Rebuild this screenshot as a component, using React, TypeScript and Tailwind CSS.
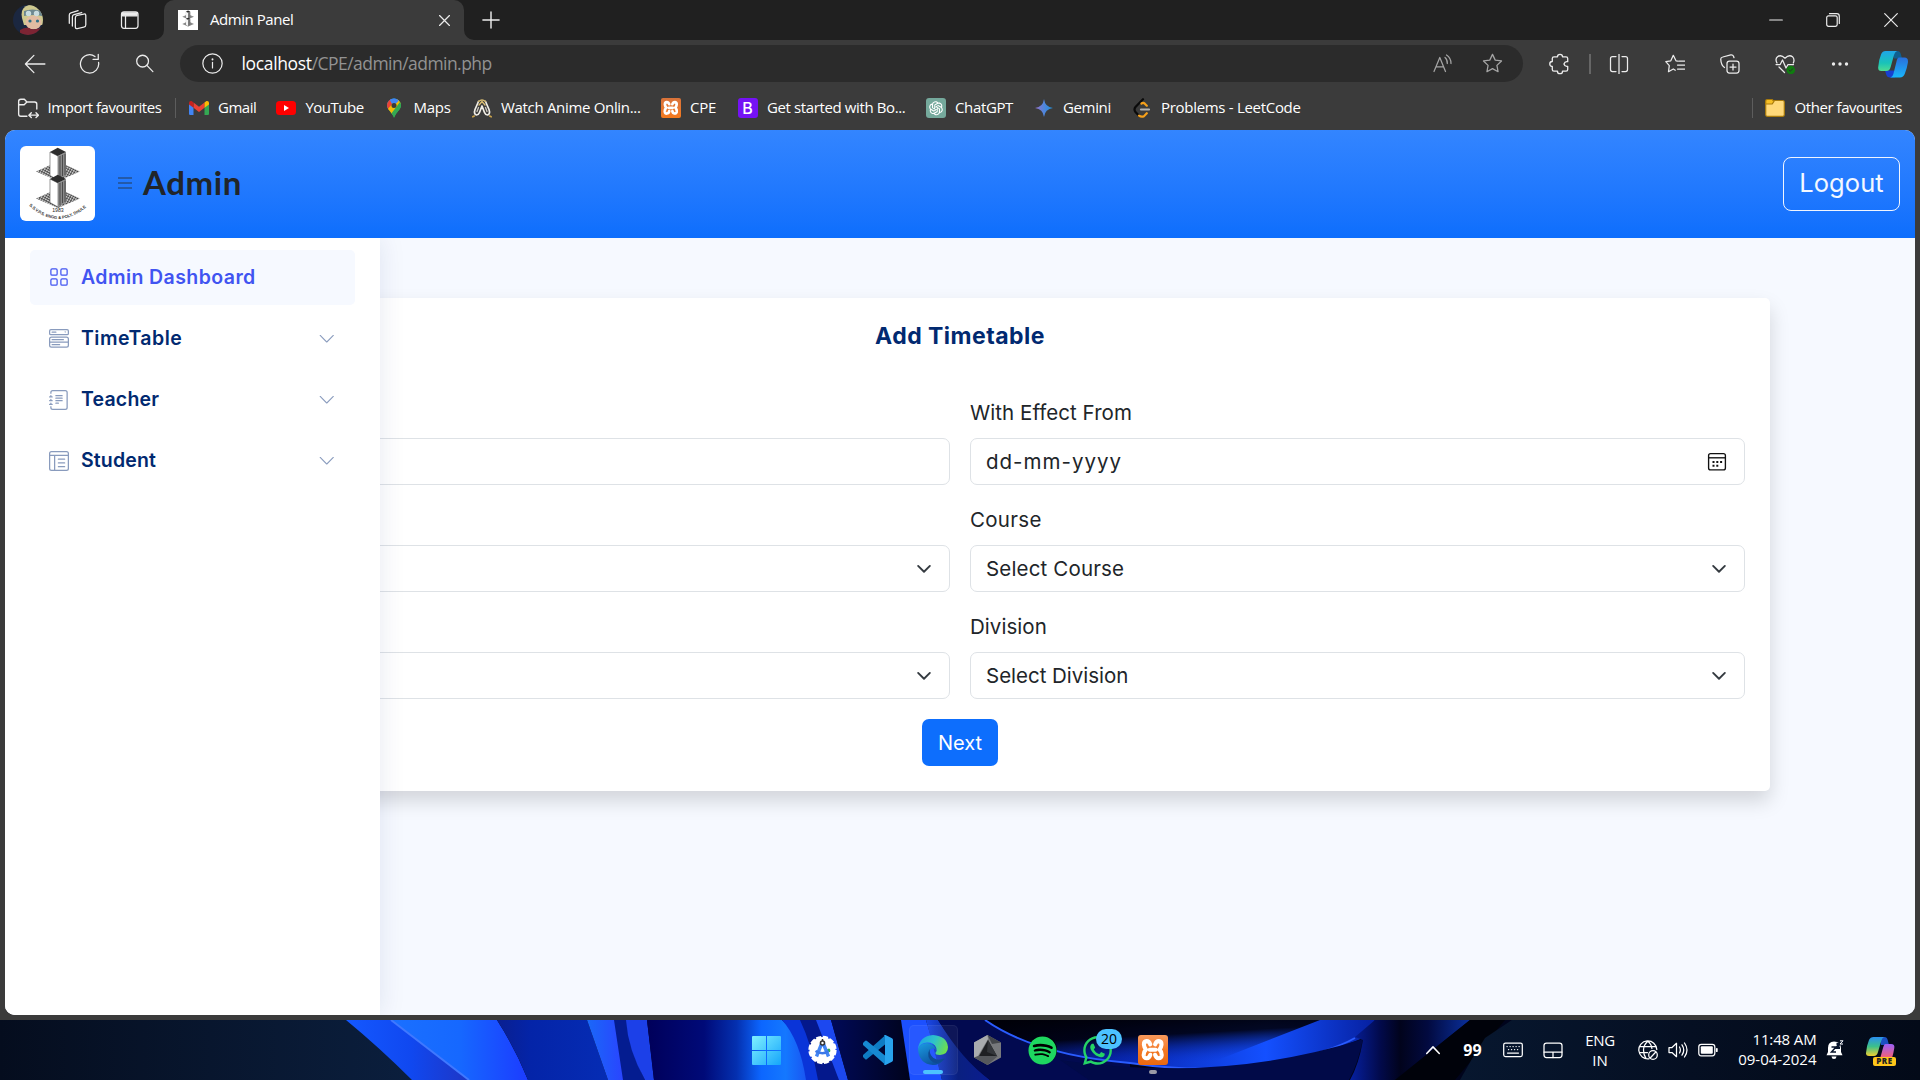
import type { ReactNode } from 'react';
import { BsGrid, BsMenuButtonWide, BsJournalText, BsLayoutTextWindowReverse, BsChevronDown } from 'react-icons/bs';
import { AiOutlineOpenAI } from 'react-icons/ai';
import { FaWhatsapp, FaSpotify } from 'react-icons/fa';

type Kids = { children: ReactNode };

/* 20px line icon used across the browser chrome */
const Line = ({ children, size = 20, w = 1.25, className = 'text-[#ececec]' }: Kids & { size?: number; w?: number; className?: string }) => (
  <svg width={size} height={size} viewBox="0 0 20 20" fill="none" stroke="currentColor" strokeWidth={w} strokeLinecap="round" strokeLinejoin="round" className={`shrink-0 ${className}`}>
    {children}
  </svg>
);

const STAR = 'M10 1.3l2.6 5.5 6 .8-4.4 4.2 1.1 6L10 14.9l-5.3 2.9 1.1-6L1.4 7.6l6-.8z';

const SchoolLogo = ({ size, caption = false }: { size: number; caption?: boolean }) => (
  <svg width={size} height={size} viewBox="0 0 75 75" className="shrink-0">
    <defs>
      <pattern id="hatch" width="2.4" height="2.4" patternUnits="userSpaceOnUse" patternTransform="rotate(28)">
        <rect width="2.4" height="2.4" fill="#c4c4c4" />
        <path d="M0 0H2.4M0 0V2.4" stroke="#333" strokeWidth="1.1" />
      </pattern>
      <path id="arc" d="M9 59.500Q37 86 68 60" />
    </defs>
    <rect width="75" height="75" fill="#fff" />
    {[0, 27].map((dy) => (
      <g key={dy} transform={`translate(0 ${dy})`}>
        <path d="M16 25.500L38 15.500 60 25.500 38 35z" fill="url(#hatch)" />
        <path d="M30 6l8 4v24l-8-4.500z" fill="#fff" stroke="#555" strokeWidth=".6" />
        <path d="M38 10l8-4v23.500l-8 4.500z" fill="#8a8a8a" />
        <path d="M40 10v22M42.500 9v21M45 8v21" stroke="#444" strokeWidth=".9" />
        <path d="M30 6l7.700-4.200L46 6l-8.200 4z" fill="#2d2d2d" />
      </g>
    ))}
    {caption && (
      <>
        <text x="38" y="65.500" textAnchor="middle" fontSize="5.200" fill="#222" fontFamily="Liberation Sans, sans-serif">1983</text>
        <text fontSize="4.200" fontWeight="700" fill="#333" fontFamily="Liberation Sans, sans-serif" letterSpacing="-.05">
          <textPath href="#arc">S.S.V.P.S. ENGG &amp; POLY. DHULE</textPath>
        </text>
      </>
    )}
  </svg>
);

const Avatar = () => (
  <svg width="30" height="30" viewBox="0 0 30 30" className="shrink-0">
    <defs><clipPath id="av"><circle cx="15" cy="15" r="15" /></clipPath></defs>
    <g clipPath="url(#av)">
      <rect width="30" height="30" fill="#1b2740" />
      <path d="M9 13Q7 2 16 0q12-1 14 10v10H11z" fill="#cfc98e" />
      <ellipse cx="20.500" cy="17.500" rx="8" ry="7" fill="#e2bca2" />
      <path d="M11 6q8-3 18 0v5q-8-2-18 0z" fill="#6d8890" />
      <circle cx="15.500" cy="8.500" r="2.700" fill="#c8dcdf" /><circle cx="23.500" cy="8.500" r="2.700" fill="#c8dcdf" />
      <circle cx="17" cy="16" r="1.600" fill="#2f6f86" /><circle cx="24.500" cy="16" r="1.600" fill="#2f6f86" />
      <path d="M7 25q7-4 11-1 5 1 12-2v8H7z" fill="#7c2433" />
    </g>
  </svg>
);

const TitleBar = () => (
  <div className="flex h-10 w-full bg-[#202020]">
    <div className="flex w-[164px] items-center pl-[13px]">
      <Avatar />
      <div className="ml-[23px]">
        <Line size={22} w={1.150}>
          <rect x="8.500" y="5.500" width="9.500" height="12" rx="1.800" transform="skewY(-12) translate(0 2.500)" />
          <path d="M5.800 15.500V7.200q0-1.500 1.500-2l7-2" />
          <path d="M3 13V5.500q0-1.500 1.500-2l6.500-2" />
        </Line>
      </div>
      <div className="ml-[32px]">
        <Line>
          <rect x="1.500" y="1.800" width="16.500" height="16.500" rx="2.500" />
          <path d="M5.500 6v12" />
          <path d="M2.500 2.800h14.500v3H2.500z" fill="#ececec" />
        </Line>
      </div>
    </div>
    <div className="relative flex h-10 w-[300px] items-center rounded-t-[10px] bg-[#3b3b3b] pl-[14px]">
      <svg className="absolute bottom-0 -left-[10px]" width="10" height="10"><path d="M10 0v10H0A10 10 0 0 0 10 0z" fill="#3b3b3b" /></svg>
      <svg className="absolute -right-[10px] bottom-0" width="10" height="10"><path d="M0 0v10h10A10 10 0 0 1 0 0z" fill="#3b3b3b" /></svg>
      <SchoolLogo size={20} />
      <span className="mb-px ml-[12px] text-[15px] tracking-[-0.45px] text-white">Admin Panel</span>
      <div className="mr-[14.500px] ml-auto"><Line size={11} w={2.200}><path d="M1 1l18 18M19 1L1 19" /></Line></div>
    </div>
    <div className="ml-[18px] flex items-center"><Line size={18} w={1.600}><path d="M10 1v18M1 10h18" /></Line></div>
    <div className="ml-auto flex items-center">
      <div className="flex w-[57.500px] justify-center"><Line size={14} w={1.700}><path d="M1 10h18" /></Line></div>
      <div className="flex w-[57.500px] justify-center">
        <Line size={14} w={1.700}><rect x="1" y="4" width="15" height="15" rx="2.500" /><path d="M5 1h10.500q3.500 0 3.500 3.500V15" /></Line>
      </div>
      <div className="flex w-[58px] justify-center"><Line size={14} w={1.700}><path d="M1 1l18 18M19 1L1 19" /></Line></div>
    </div>
  </div>
);

const Copilot = () => (
  <svg width="30" height="28" viewBox="0 0 30 28" className="shrink-0">
    <defs>
      <linearGradient id="c1" x1="0" y1="0" x2="0" y2="1"><stop stopColor="#1fa5e8" /><stop offset=".6" stopColor="#19c3b8" /><stop offset="1" stopColor="#4fdc92" /></linearGradient>
      <linearGradient id="c2" x1="0" y1="0" x2="0" y2="1"><stop stopColor="#2a6fdc" /><stop offset="1" stopColor="#19b6fb" /></linearGradient>
    </defs>
    <path d="M14 1h5.500q2.500 0 3.300 3l1.200 4.500h-8z" fill="#0f5f8f" />
    <path d="M7 20.500h9l1 7H12q-3 0-3.800-3z" fill="#1740d0" />
    <path d="M7.500 1H19q-2.200 1-3 4l-3.200 11.500q-1.100 4.500-4.300 4.500H3.200Q-.2 21 .2 17 1 9 3.200 4 4.500 1 7.500 1z" fill="url(#c1)" />
    <path d="M21 7.500h5.500q4 0 3.400 5-.9 6-3 11-1.400 4-5 4H12q2.700-.5 3.500-4L18.400 12q.8-4.500 2.600-4.500z" fill="url(#c2)" />
  </svg>
);

const Slot = ({ children, className }: Kids & { className: string }) => <div className={`flex shrink-0 items-center justify-center ${className}`}>{children}</div>;

const Toolbar = () => (
  <div className="flex h-[47px] items-center">
    <Slot className="ml-[7px] w-[55px]"><Line size={22} w={1.150}><path d="M19 10H1.500M9 2.200L1.300 10 9 17.800" /></Line></Slot>
    <Slot className="w-[55px]"><Line size={22} w={1.150}><path d="M17.800 8.500A8.300 8.300 0 1 1 14.500 3.200M17.500 1.200v4.700h-4.700" /></Line></Slot>
    <Slot className="w-[55px]"><Line size={19} w={1.350}><circle cx="8" cy="7.500" r="6.200" /><path d="M12.500 12l6.300 6.500" /></Line></Slot>
    <div className="ml-[8px] flex h-[36.500px] w-[1343px] items-center rounded-full bg-[#2b2b2b] pl-[22px]">
      <Line size={21} w={1.150}><circle cx="10" cy="10" r="9.200" /><path d="M10 9v5.200" /><path d="M10 6v.2" strokeWidth="1.800" /></Line>
      <span className="ml-[18.500px] text-[17.500px] tracking-[-0.35px] text-white">localhost</span>
      <span className="text-[17.500px] tracking-[-0.54px] text-[#929292]">/CPE/admin/admin.php</span>
      <div className="ml-auto flex items-center pr-[20px]">
        <Line className="mr-[29px] text-[#a5a5a5]" w={1.250}><path d="M1 17.500L6.800 3.500l5.700 14M3 12.800h7.600M12 3.500q2.500 2 2.300 6M13.500 1q4.600 3 4.500 8.500" /></Line>
        <Line size={21} w={1.200} className="text-[#a5a5a5]"><path d={STAR} /></Line>
      </div>
    </div>
    <Slot className="ml-[9.500px] w-[55px]">
      <Line size={22} w={1.200}><path d="M4.500 3.500h3.200a2.300 2.300 0 0 1 4.600 0h3.200q1.500 0 1.500 1.500v2.900q-2.600-.6-3.400 2.100.8 2.700 3.400 2.100V15q0 1.500-1.500 1.500h-3.200a2.300 2.300 0 0 1-4.600 0H4.500Q3 16.500 3 15v-2.700a2.300 2.300 0 0 1 0-4.600V5q0-1.500 1.500-1.500z" /></Line>
    </Slot>
    <div className="ml-[1.500px] h-5 w-[1.500px] bg-[#666]" />
    <Slot className="w-[57px]"><Line><path d="M10 0v20M7 2.500H3.500q-2 0-2 2v11q0 2 2 2H7M13 2.500h3.500q2 0 2 2v11q0 2-2 2H13" /></Line></Slot>
    <Slot className="w-[55px]"><Line><path d="M13 7.200l-2-.4L8.300 1.300 5.800 6.800l-5 .9 3.500 4-.8 6 4.800-2.700 2 1.200M14 7h5.500M12.500 11h7M12.500 15h7" /></Line></Slot>
    <Slot className="w-[55px]">
      <Line><rect x="7" y="7" width="12" height="12" rx="2.500" /><path d="M13 10v6M10 13h6M4.500 13.500Q1 11 .8 5.500q-.3-2 2-2.500l8-2.200q2-.3 2.700 1.400l.5 1.500" /></Line>
    </Slot>
    <Slot className="w-[55px]">
      <Line><path d="M2 9Q-.2 5 2.500 2.700 6 .2 10 4.200q4-4 7.500-1.500Q20 5.500 18.300 9M1 10.500h4.200L7.500 6l3.500 8 2-3.500h5.500M4 13l5.500 5.500" /><circle cx="15.800" cy="16" r="4.300" fill="#107c10" stroke="none" /><path d="M14 16l1.300 1.300 2.300-2.500" stroke="#2b2b2b" strokeWidth=".9" /></Line>
    </Slot>
    <Slot className="w-[55px]"><Line><g fill="#ececec" stroke="none"><circle cx="3.500" cy="10" r="1.700" /><circle cx="10" cy="10" r="1.700" /><circle cx="16.500" cy="10" r="1.700" /></g></Line></Slot>
    <Slot className="w-[51px]"><Copilot /></Slot>
  </div>
);

const Gmail = () => (
  <svg width="20" height="20" viewBox="0 0 20 20"><path d="M0 5v11q0 1 1.200 1h3.300V9z" fill="#4285f4" /><path d="M20 5v11q0 1-1.200 1h-3.300V9z" fill="#34a853" /><path d="M4.500 4.500v5.300L10 14l5.500-4.200V4.500L10 8.700z" fill="#ea4335" /><path d="M0 4.700Q.2 2.500 2.500 3l2 1.500v5.300L0 6.500z" fill="#c5221f" /><path d="M20 4.700Q19.800 2.500 17.500 3l-2 1.500v5.300L20 6.500z" fill="#fbbc04" /></svg>
);
const YouTube = () => (
  <svg width="20" height="20" viewBox="0 0 20 20"><rect y="3" width="20" height="14" rx="3.500" fill="#f00" /><path d="M8 7l5 3-5 3z" fill="#fff" /></svg>
);
const Maps = () => (
  <svg width="20" height="20" viewBox="0 0 20 20"><defs><clipPath id="pin"><path d="M10 .5a7 7 0 0 1 7 7c0 4-5 6.500-7 12.500C8 14 3 11.500 3 7.500a7 7 0 0 1 7-7z" /></clipPath></defs><g clipPath="url(#pin)"><rect width="20" height="20" fill="#34a853" /><path d="M0 0h13L2 14H0z" fill="#1a73e8" /><path d="M0 0h6l4 6-6 7-4-4z" fill="#ea4335" /><path d="M5 0h12l-4 5-4 3z" fill="#4285f4" /><path d="M3 12l6-7 5-4 3 4-9 12z" fill="#fbbc04" opacity=".95" /><path d="M16 4l3 4-8 12-4-4z" fill="#34a853" /><path d="M6 2.500Q10-1 15 2.500l-5 5z" fill="#4285f4" /></g><circle cx="10" cy="7.500" r="2.500" fill="#3b3b3b" /></svg>
);
const Anime = () => (
  <svg width="20" height="20" viewBox="0 0 20 20" fill="none" strokeWidth="1.700" strokeLinejoin="round" strokeLinecap="round"><path d="M6.500 3.500L3 11.500q-1.500 4.500 1.500 5.500 2 0 3-2.500L10 8l2.500 6.500q1 2.500 3 2.500 3-1 1.500-5.500L13.500 3.500" stroke="#f1eee6" /><path d="M6.500 3.500q3.500-3 7 0M7 7l3-3.500L13 7" stroke="#d9bd72" strokeWidth="1.400" /><path d="M6.500 9.500l-1.500 4M13.500 9.500l1.500 4" stroke="#cfcac0" strokeWidth="1.300" /><path d="M.8 18.800l1.500-.8M19.200 18.800l-1.500-.8" stroke="#c9a24b" strokeWidth="1.600" /></svg>
);
const Xampp = ({ size }: { size: number }) => (
  <div className={size > 20 ? 'flex h-[30px] w-[30px] items-center justify-center rounded-[3px] bg-gradient-to-b from-[#f99a5c] via-[#f47a24] to-[#e9680f]' : 'flex h-5 w-5 items-center justify-center rounded-[2px] bg-gradient-to-b from-[#d9733a] to-[#f47a1c]'}>
    <svg width={size * 0.78} height={size * 0.78} viewBox="0 0 24 24" fill="none" stroke="#fff" strokeWidth="4.200" strokeLinejoin="round" strokeLinecap="round"><path d="M9.500 6.500Q8.500 3.200 5.800 3.200 2.800 3.500 3 7q.2 2.500 2 4.800Q2.500 14.500 2.800 18q.4 2.800 3 2.800 3-.3 3.700-3.600M14.500 6.500q1-3.300 3.700-3.300 3 .3 2.800 3.800-.2 2.500-2 4.800 2.500 2.700 2.200 6.200-.4 2.800-3 2.800-3-.3-3.700-3.600M9 12h6" /></svg>
  </div>
);
const Boot = () => <div className="flex h-5 w-5 items-center justify-center rounded-[3px] bg-[#7512f5] font-['Inter'] text-[16px] leading-none font-medium text-white">B</div>;
const Gpt = () => <div className="flex h-5 w-5 items-center justify-center rounded-[3px] bg-[#75a99c] text-white"><AiOutlineOpenAI size={18} /></div>;
const Gemini = () => (
  <svg width="20" height="20" viewBox="0 0 20 20"><defs><linearGradient id="gm"><stop stopColor="#9a72c8" /><stop offset=".5" stopColor="#5086dc" /><stop offset="1" stopColor="#1f8fd8" /></linearGradient></defs><path d="M10 1q1 8 9 9-8 1-9 9-1-8-9-9 8-1 9-9z" fill="url(#gm)" /></svg>
);
const Leet = () => (
  <svg width="20" height="20" viewBox="0 0 20 20" fill="none" strokeWidth="2.200" strokeLinecap="round"><path d="M11 1.200L3.500 9q-2 2.500 0 5l3.500 3.700" stroke="#0a0a0a" /><path d="M9.500 5.500q1.700-1.200 3.300.2l2 2M7 17.700q2.500 1.700 5 .5l2.800-3" stroke="#f6a01a" /><path d="M9 11.500h8" stroke="#b3b3b3" /></svg>
);

const BOOKMARKS: [ReactNode, string, string, string][] = [
  [<Gmail />, 'Gmail', 'w-[87.500px]', 'tracking-[-0.5px]'],
  [<YouTube />, 'YouTube', 'w-[108px]', 'tracking-[-0.52px]'],
  [<Maps />, 'Maps', 'w-[87.500px]', 'tracking-[-0.29px]'],
  [<Anime />, 'Watch Anime Onlin...', 'w-[189px]', 'tracking-[-0.32px]'],
  [<Xampp size={20} />, 'CPE', 'w-[77px]', 'tracking-[-0.27px]'],
  [<Boot />, 'Get started with Bo...', 'w-[188px]', 'tracking-[-0.38px]'],
  [<Gpt />, 'ChatGPT', 'w-[108px]', 'tracking-[-0.36px]'],
  [<Gemini />, 'Gemini', 'w-[98px]', 'tracking-[-0.36px]'],
  [<Leet />, 'Problems - LeetCode', 'w-[180px]', 'tracking-[-0.3px]'],
];

const Bookmarks = () => (
  <div className="flex h-[43px] items-center pb-[2px] text-[15px] whitespace-nowrap text-white">
    <div className="flex w-[175px] items-center pl-[16.500px]">
      <Line size={22} w={1.250}><path d="M9 17.500H3.500q-2 0-2-2V4q0-2 2-2h3.200L9 4.500h7q2 0 2 2V11M1.500 7h5L9 4.500M11 16.500h8.500M13 14.300l-2.200 2.200 2.200 2.200M17.300 14.300l2.200 2.200-2.200 2.200" /></Line>
      <span className="ml-[9px] tracking-[-0.45px]">Import favourites</span>
    </div>
    <div className="mr-[12.500px] h-5 w-px bg-[#5d5d5d]" />
    {BOOKMARKS.map(([icon, label, w, tr]) => (
      <div key={label} className={`flex shrink-0 items-center ${w}`}>
        <div className="w-5 shrink-0">{icon}</div>
        <span className={`ml-[9.500px] ${tr}`}>{label}</span>
      </div>
    ))}
    <div className="ml-auto flex items-center pr-[18px]">
      <div className="mr-[12px] h-5 w-px bg-[#5d5d5d]" />
      <svg width="20" height="20" viewBox="0 0 20 20"><rect x=".7" y="2.500" width="18.600" height="15.800" rx="1.500" fill="#ffd97a" stroke="#a97b0c" strokeWidth="1.200" /><path d="M.7 6V3q0-1.500 1.500-1.500h5L9 3.300 7.200 6z" fill="#f6bf26" stroke="#a97b0c" strokeWidth="1.200" /></svg>
      <span className="ml-[10px] tracking-[-0.45px]">Other favourites</span>
    </div>
  </div>
);

const Header = () => (
  <header className="flex h-[108px] items-center bg-gradient-to-b from-[#3385ff] to-[#0d6efd] px-[15px]">
    <div className="mb-[2px] overflow-hidden rounded-[6px]"><SchoolLogo size={75} caption /></div>
    <svg width="14" height="12" viewBox="0 0 14 12" className="mb-[2px] ml-[23px] shrink-0"><path d="M0 1h14M0 6h14M0 11h14" stroke="#25508d" strokeWidth="1.600" /></svg>
    <h1 className="mb-[3px] ml-[11px] font-['Lato'] text-[33px] leading-none font-bold tracking-[0.6px] text-[#212529]">Admin</h1>
    <button className="ml-auto flex h-[54px] w-[117px] items-center justify-center rounded-[8px] border border-[#f0f5ff] pb-px text-[25.500px] tracking-[0.1px] text-[#f4f8ff]">Logout</button>
  </header>
);

const NAV = [
  { icon: <BsMenuButtonWide size={20} />, label: 'TimeTable', tr: 'tracking-[0.47px]' },
  { icon: <BsJournalText size={20} />, label: 'Teacher', tr: 'tracking-[0.2px]' },
  { icon: <BsLayoutTextWindowReverse size={20} />, label: 'Student', tr: 'tracking-[0.15px]' },
];

const Sidebar = () => (
  <aside className="absolute inset-y-0 left-0 flex w-[375px] flex-col gap-[6px] bg-white px-[25px] pt-[12px] text-[19.500px] font-semibold shadow-[0_0_25px_rgba(1,41,112,0.1)]">
    <a className="flex h-[55px] shrink-0 items-center rounded-[5px] bg-[#f6f9ff] pl-[18.500px] text-[#4154f1]">
      <BsGrid size={20} className="mb-[2px]" />
      <span className="ml-[12.500px] tracking-[0.42px]">Admin Dashboard</span>
    </a>
    {NAV.map((n) => (
      <a key={n.label} className="flex h-[55px] shrink-0 items-center pr-[20px] pl-[18.500px] text-[#012970]">
        <span className="text-[#899bbd]">{n.icon}</span>
        <span className={`mt-px ml-[12.500px] ${n.tr}`}>{n.label}</span>
        <BsChevronDown size={17.500} className="ml-auto text-[#899bbd]" />
      </a>
    ))}
  </aside>
);

const Caret = () => (
  <svg width="20" height="20" viewBox="0 0 16 16" fill="none" stroke="#343a40" strokeWidth="1.500" strokeLinecap="round" strokeLinejoin="round"><path d="M3.300 5.500L8 10.200l4.700-4.700" /></svg>
);
const Calendar = () => (
  <svg width="20" height="20" viewBox="0 0 20 20" fill="none" stroke="#111" strokeWidth="1.350"><rect x="1.600" y="1.600" width="16.800" height="16.300" rx="2" /><path d="M1.600 5.800h16.800" /><path d="M5.500 10h2M9.300 10h2M13.100 10h2M5.500 13.700h2M9.300 13.700h2" strokeWidth="1.900" /></svg>
);

const Field = ({ label, text, tr, ltr, end, endPad = 'pr-[15px]' }: { label?: string; text?: string; tr?: string; ltr?: string; end?: ReactNode; endPad?: string }) => (
  <div className="flex flex-col">
    <label className={`flex h-[30px] items-center ${ltr ?? ''}`}>{label}</label>
    <div className={`mt-[10px] flex h-[47px] items-center justify-between rounded-[7px] border border-[#dee2e6] pl-[15px] ${endPad}`}>
      <span className={`mt-[2px] ${tr ?? ''}`}>{text}</span>
      {end}
    </div>
  </div>
);

const Main = () => (
  <main className="relative flex h-[777px] justify-center overflow-hidden bg-[#f6f9ff] pt-[60px]">
    <section className="flex h-[493px] w-[1620px] flex-col items-center rounded-[5px] bg-white px-[25px] text-[20.500px] text-[#212529] shadow-[0_10px_20px_rgba(0,0,0,0.15)]">
      <h2 className="mt-[20px] flex h-[36px] items-center text-[23px] font-bold tracking-[0.48px] text-[#012970]">Add Timetable</h2>
      <form className="mt-[44px] grid w-full grid-cols-2 gap-x-[20px] gap-y-[20px]">
        <Field />
        <Field label="With Effect From" ltr="tracking-[0.05px]" text="dd-mm-yyyy" tr="tracking-[1px]" end={<Calendar />} endPad="pr-[17px]" />
        <Field end={<Caret />} />
        <Field label="Course" ltr="tracking-[0.3px]" text="Select Course" tr="tracking-[0.16px]" end={<Caret />} />
        <Field end={<Caret />} />
        <Field label="Division" ltr="tracking-[0.05px]" text="Select Division" tr="tracking-[-0.02px]" end={<Caret />} />
      </form>
      <button className="mt-[20px] h-[47px] w-[76px] rounded-[7px] bg-[#0d6efd] text-[20px] text-white">Next</button>
    </section>
    <Sidebar />
  </main>
);

const Wallpaper = () => (
  <svg className="absolute inset-0" width="1920" height="60" viewBox="0 0 1920 60" preserveAspectRatio="none">
    <defs>
      <linearGradient id="wl"><stop stopColor="#050d1e" /><stop offset="1" stopColor="#0b1f3e" /></linearGradient>
      <linearGradient id="w1"><stop stopColor="#1458ff" /><stop offset=".5" stopColor="#1048f0" /><stop offset="1" stopColor="#2034c0" /></linearGradient>
      <linearGradient id="w2"><stop stopColor="#1a70ff" /><stop offset=".5" stopColor="#1668ff" /><stop offset="1" stopColor="#1c3cff" /></linearGradient>
      <linearGradient id="w3"><stop stopColor="#0a1f90" /><stop offset=".3" stopColor="#0424a8" /><stop offset="1" stopColor="#052cb4" /></linearGradient>
      <linearGradient id="w4"><stop stopColor="#1a68f8" /><stop offset="1" stopColor="#2a44ff" /></linearGradient>
      <linearGradient id="w5"><stop stopColor="#00005a" /><stop offset=".35" stopColor="#000a78" /><stop offset=".55" stopColor="#0430b0" /><stop offset=".7" stopColor="#0c66ff" /><stop offset=".85" stopColor="#1478ff" /><stop offset="1" stopColor="#1a50f0" /></linearGradient>
      <linearGradient id="w6"><stop stopColor="#1a48e8" /><stop offset=".5" stopColor="#0a2080" /><stop offset="1" stopColor="#0a1c90" /></linearGradient>
      <linearGradient id="w7"><stop stopColor="#000538" /><stop offset=".35" stopColor="#0826b0" /><stop offset=".72" stopColor="#1450ff" /><stop offset="1" stopColor="#0620a0" /></linearGradient>
      <linearGradient id="w8" x1="0" y1="0" x2=".4" y2="1"><stop stopColor="#000008" /><stop offset=".45" stopColor="#00000c" stopOpacity=".9" /><stop offset="1" stopColor="#0a30d0" stopOpacity="0" /></linearGradient>
      <linearGradient id="w9"><stop stopColor="#0620a0" /><stop offset=".25" stopColor="#020a4c" /><stop offset=".42" stopColor="#01031c" /><stop offset=".65" stopColor="#020a40" /><stop offset="1" stopColor="#0a309c" /></linearGradient>
      <linearGradient id="wr"><stop stopColor="#07172f" /><stop offset=".5" stopColor="#050f22" /><stop offset="1" stopColor="#030a18" /></linearGradient>
      <linearGradient id="wn"><stop stopColor="#000a58" /><stop offset="1" stopColor="#00031c" /></linearGradient>
    </defs>
    <rect width="1920" height="60" fill="#00041c" />
    <rect width="420" height="60" fill="url(#wl)" />
    <path d="M346 0h50l80 60h-64Q380 28 346 0z" fill="url(#w1)" />
    <path d="M391 0h106q18 28 31 60h-59z" fill="url(#w2)" />
    <path d="M391 0l78 60" stroke="#3f78ff" strokeWidth="2" />
    <path d="M497 0h90l21 60h-80Q515 28 497 0z" fill="url(#w3)" />
    <path d="M587 0h28l9 60h-16z" fill="url(#w4)" />
    <path d="M614 0h13q2 30 18 60h-22z" fill="#041c90" />
    <path d="M626 0h21l7 60h-9Q628 30 626 0z" fill="#1c40e8" />
    <path d="M647 0h135q22 20 28 60H654z" fill="url(#w5)" />
    <path d="M782 0h20q14 30 18 60h-14Q800 20 782 0z" fill="#0a34d8" />
    <path d="M800 0h18l22 60h-22q-6-35-18-60z" fill="#04188c" />
    <path d="M816 0h15l17 60h-9z" fill="#1c48f0" />
    <path d="M831 0h71l8 60h-62z" fill="url(#wn)" />
    <path d="M901 0h25q10 32 16 60h-32z" fill="#1c50ff" />
    <path d="M926 0h12q25 38 52 60h-48z" fill="url(#w6)" />
    <path d="M938 0h50q50 36 142 43v17H990q-28-20-52-60z" fill="#020a50" />
    <path d="M985 0q50 35 145 43 80 12 150-1 50-10 83-24l12-18z" fill="url(#w7)" />
    <path d="M985 0q50 35 145 43 40 4 70 4l120-47z" fill="url(#w8)" />
    <path d="M985 0q50 35 145 43 80 12 150-1 50-10 75-24" fill="none" stroke="#2a5cff" strokeWidth="2" />
    <path d="M1060 40q160 24 303-21-5 25-14 41h-260z" fill="#010a48" />
    <path d="M1375 0l-20 17 8 3q-4 24-13 40h45l75-60z" fill="url(#w9)" />
    <path d="M1470 0h35l-50 60h-60z" fill="#00020a" />
    <path d="M1512 0h408v60h-460q12-22 25-42z" fill="url(#wr)" />
  </svg>
);

const Start = () => (
  <svg width="29" height="29" viewBox="0 0 29 29"><defs><linearGradient id="st" x1="0" y1="0" x2="1" y2="1"><stop stopColor="#7ff0ff" /><stop offset="1" stopColor="#15a5fb" /></linearGradient></defs><path d="M0 1q0-1 1-1h13v14H0zM15 0h13q1 0 1 1v13H15zM0 15h14v14H1q-1 0-1-1zM15 15h14v13q0 1-1 1H15z" fill="url(#st)" /></svg>
);
const Studio = () => (
  <svg width="29" height="30" viewBox="0 0 29 30" fill="none"><circle cx="14.500" cy="15" r="13" fill="#fff" stroke="#fff" strokeWidth="2.300" strokeDasharray="5.200 1.600" /><path d="M17 15l4-1.500q2 1 1 3.500l-3 .5z" fill="#34a853" /><path d="M13.500 9L8.500 21.500M15.500 9l5 12.500" stroke="#4285f4" strokeWidth="3.400" /><path d="M7.500 16q7 4.500 13 0" stroke="#3b78e8" strokeWidth="2.500" /><circle cx="14.500" cy="8" r="2" fill="#fff" stroke="#333" strokeWidth="1.600" /><path d="M14.500 4v2" stroke="#333" strokeWidth="1.500" /></svg>
);
const Code = () => (
  <svg width="30" height="30" viewBox="0 0 30 30"><path d="M22 0L0 19.500q-1 1 0 2l2 2q1 1 2 0L22 9z" fill="#0e7cc4" transform="translate(0 .5)" /><path d="M22 30L0 10.500q-1-1 0-2l2-2q1-1 2 0L22 21z" fill="#1689d2" transform="translate(0 -.5)" /><path d="M21 .5q1-1 2-.3l6 3q1 .5 1 1.800v20q0 1.300-1 1.800l-6 3q-1 .7-2-.3l1-1V1.500z" fill="#28a3ee" /></svg>
);
const Edge = () => (
  <svg width="30" height="30" viewBox="0 0 30 30">
    <defs>
      <linearGradient id="e1" x1="0" y1=".3" x2="1" y2=".6"><stop stopColor="#1fa4e6" /><stop offset=".5" stopColor="#2ec3c9" /><stop offset="1" stopColor="#6fe04a" /></linearGradient>
      <linearGradient id="e2" x1="0" y1="0" x2=".6" y2="1"><stop stopColor="#1b9de2" /><stop offset="1" stopColor="#0c4f9e" /></linearGradient>
    </defs>
    <path d="M0 14Q2 8 9 8q8 1 9 7-4-3-6 .5-2 5.500 3 9.500 6 3.500 11-1-4 6-11 6Q1 29 0 14z" fill="url(#e2)" />
    <path d="M11.500 14q-4 9 4 13.500 6 1.500 11-3 .8-1-.5-1-6 2.500-10.500-.5-4-3-4-9z" fill="#0f4a94" />
    <path d="M0 14Q1.500 1 15 0q14 1 15 12 0 7.500-8 8-5 0-4.500-2.200 1.800-2 .8-4.800-2-5.500-9-5.500Q2 7.500 0 14z" fill="url(#e1)" />
  </svg>
);
const Hex = () => (
  <svg width="27" height="30" viewBox="0 0 27 30"><path d="M13.500 0L27 7.500v15L13.500 30 0 22.500v-15z" fill="#77797c" /><path d="M13.500 0L27 7.500 18 9z" fill="#44474b" /><path d="M0 7.500L13.500 0 14 4 3 22.500 0 22.500z" fill="#a9acae" /><path d="M14 5l9 16H5z" fill="#1e2023" /><path d="M14 5l9 16-10-4z" fill="#33363a" /><path d="M4 21h20l-10.500 9L0 22.500z" fill="#55585c" /></svg>
);
const TrayCopilot = () => (
  <div className="relative h-[29px] w-[30px]">
    <svg width="29" height="21" viewBox="0 0 29 21">
      <defs>
        <linearGradient id="t1" x1="0" y1="0" x2="0" y2="1"><stop stopColor="#2a8ff0" /><stop offset=".5" stopColor="#3cc08a" /><stop offset="1" stopColor="#f0d030" /></linearGradient>
        <linearGradient id="t2" x1="0" y1="0" x2="0" y2="1"><stop stopColor="#9a60f8" /><stop offset="1" stopColor="#f0607a" /></linearGradient>
      </defs>
      <path d="M14 0h4.500q2.500 0 3.200 3L23 8h-8z" fill="#1c50c0" />
      <path d="M7.500 0H18q-2 1-2.800 4L12 15q-1 4-4 4H3q-3.300 0-3-3Q.8 8 3 3q1.300-3 4.500-3z" fill="url(#t1)" />
      <path d="M19.500 7H25q4 0 3.300 4-.8 5-2 9H14.500L17 11q1-4 2.500-4z" fill="url(#t2)" />
    </svg>
    <span className="absolute right-0 bottom-0 flex h-[9px] w-[23px] items-center justify-center rounded-[2px] bg-[#ffc61a] text-[8px] leading-none font-extrabold tracking-[0.5px] text-[#222]">PRE</span>
  </div>
);

const Taskbar = () => (
  <footer className="relative h-[60px] w-full overflow-hidden">
    <Wallpaper />
    <div className="relative flex h-[60px] items-center pl-[739px] text-white">
      <Slot className="mr-[1px] w-[55px]"><Start /></Slot>
      <Slot className="w-[55px]"><Studio /></Slot>
      <Slot className="w-[55.500px]"><Code /></Slot>
      <div className="relative flex h-[50px] w-[55px] items-center justify-center">
        <div className="absolute inset-x-[3px] inset-y-0 rounded-[5px] border border-white/5 bg-white/5" />
        <div className="relative"><Edge /></div>
        <div className="absolute bottom-px left-[17.500px] h-1 w-5 rounded-full bg-[#4cc2ff]" />
      </div>
      <Slot className="w-[54.500px]"><Hex /></Slot>
      <Slot className="w-[55px]">
        <div className="flex h-[28px] w-[28px] items-center justify-center rounded-full bg-black"><FaSpotify size={29} className="shrink-0 text-[#1ed760]" /></div>
      </Slot>
      <div className="relative flex w-[55px] items-center justify-center">
        <FaWhatsapp size={33} className="text-[#25d366]" />
        <span className="absolute -top-[5px] right-[3px] flex h-[20px] w-[26px] items-center justify-center rounded-full bg-[#4cc2ff] text-[14px] leading-none text-black">20</span>
      </div>
      <div className="relative flex h-[50px] w-[55px] items-center justify-center">
        <Xampp size={30} />
        <div className="absolute bottom-px left-[23.500px] h-1 w-2 rounded-full bg-[#9a9aa6]" />
      </div>
      <div className="ml-auto flex items-center text-[15px]">
        <Slot className="w-[40px]"><Line size={14} w={2.200} className="text-white"><path d="M1 15L10 5.500 19 15" /></Line></Slot>
        <Slot className="w-[39px]"><span className="text-[16px] font-bold">99</span></Slot>
        <Slot className="w-[41px]"><Line className="text-white"><rect x=".7" y="3" width="18.600" height="13.500" rx="1.800" /><path d="M4 6.500h.2M7 6.500h.2M10 6.500h.2M13 6.500h.2M16 6.500h.2M5.500 9.500h.2M8.500 9.500h.2M11.500 9.500h.2M14.500 9.500h.2M4.500 13h11" /></Line></Slot>
        <Slot className="w-[39px]"><Line className="text-white"><rect x="1" y="3" width="18" height="14.500" rx="2.500" /><path d="M1 12h18M10 12v5.500" /></Line></Slot>
        <div className="flex w-[56px] flex-col items-center pb-px leading-5"><span className="tracking-[-0.35px]">ENG</span><span>IN</span></div>
        <Slot className="ml-[5px] w-[30px]">
          <Line className="text-white"><path d="M11 18.800A9 9 0 1 1 18.800 9.500M8 18.300Q5.500 15 5.500 10T9.800 1.200Q13.500 4 13.900 8.500M2 6.500h15.700M1.500 12.500h8" /><circle cx="15" cy="15" r="4.300" /><path d="M12.200 18l5.600-6" /></Line>
        </Slot>
        <Slot className="w-[30px]"><Line className="text-white"><path d="M1 7.500h3l4.500-4.200v13.400L4 12.500H1zM11.500 7q1.700 3 0 6M14 4.800q3.500 5.200 0 10.400M16.500 3q5 7 0 14" /></Line></Slot>
        <Slot className="w-[30px]"><Line className="text-white"><rect x=".8" y="4.300" width="16" height="11.500" rx="2.500" /><rect x="2.800" y="6.300" width="12" height="7.500" rx="1" fill="white" stroke="none" /><path d="M18.800 8.800v2.400" strokeWidth="1.800" /></Line></Slot>
        <div className="flex w-[93.500px] flex-col items-end pb-[2px] leading-5"><span className="tracking-[-0.14px]">11:48 AM</span><span>09-04-2024</span></div>
        <Slot className="ml-[3.500px] w-[30px]">
          <svg width="18" height="20" viewBox="0 0 18 20"><path d="M2 8q0-6.500 6-6.500 7 0 7 6.500v4l1.500 3.300H.5L2 12z" fill="#fff" /><path d="M5.500 16.500h5q-.3 2.500-2.500 2.500t-2.500-2.500z" fill="#fff" /><path d="M5.500 7h4.500l-4.500 5H10" stroke="#07132a" strokeWidth="1.500" fill="none" /><path d="M10.500 4h3.200l-3.200 3.800h3.500M14 1h3l-3 3h3" stroke="#07132a" strokeWidth="2.400" fill="none" /><path d="M14 .8h3l-3 3.200h3" stroke="#fff" strokeWidth="1" fill="none" /></svg>
        </Slot>
        <Slot className="mt-[2px] mr-[12px] ml-[4px] w-[54px]"><TrayCopilot /></Slot>
      </div>
    </div>
  </footer>
);

export default function App() {
  return (
    <div className="flex h-[1080px] w-[1920px] flex-col overflow-hidden bg-[#3b3b3b] font-['Open_Sans',sans-serif]">
      <TitleBar />
      <Toolbar />
      <Bookmarks />
      <div className="mx-[5px] mb-[5px] h-[885px] overflow-hidden rounded-[10px] bg-[#f6f9ff] font-['Inter',sans-serif]">
        <Header />
        <Main />
      </div>
      <Taskbar />
    </div>
  );
}
